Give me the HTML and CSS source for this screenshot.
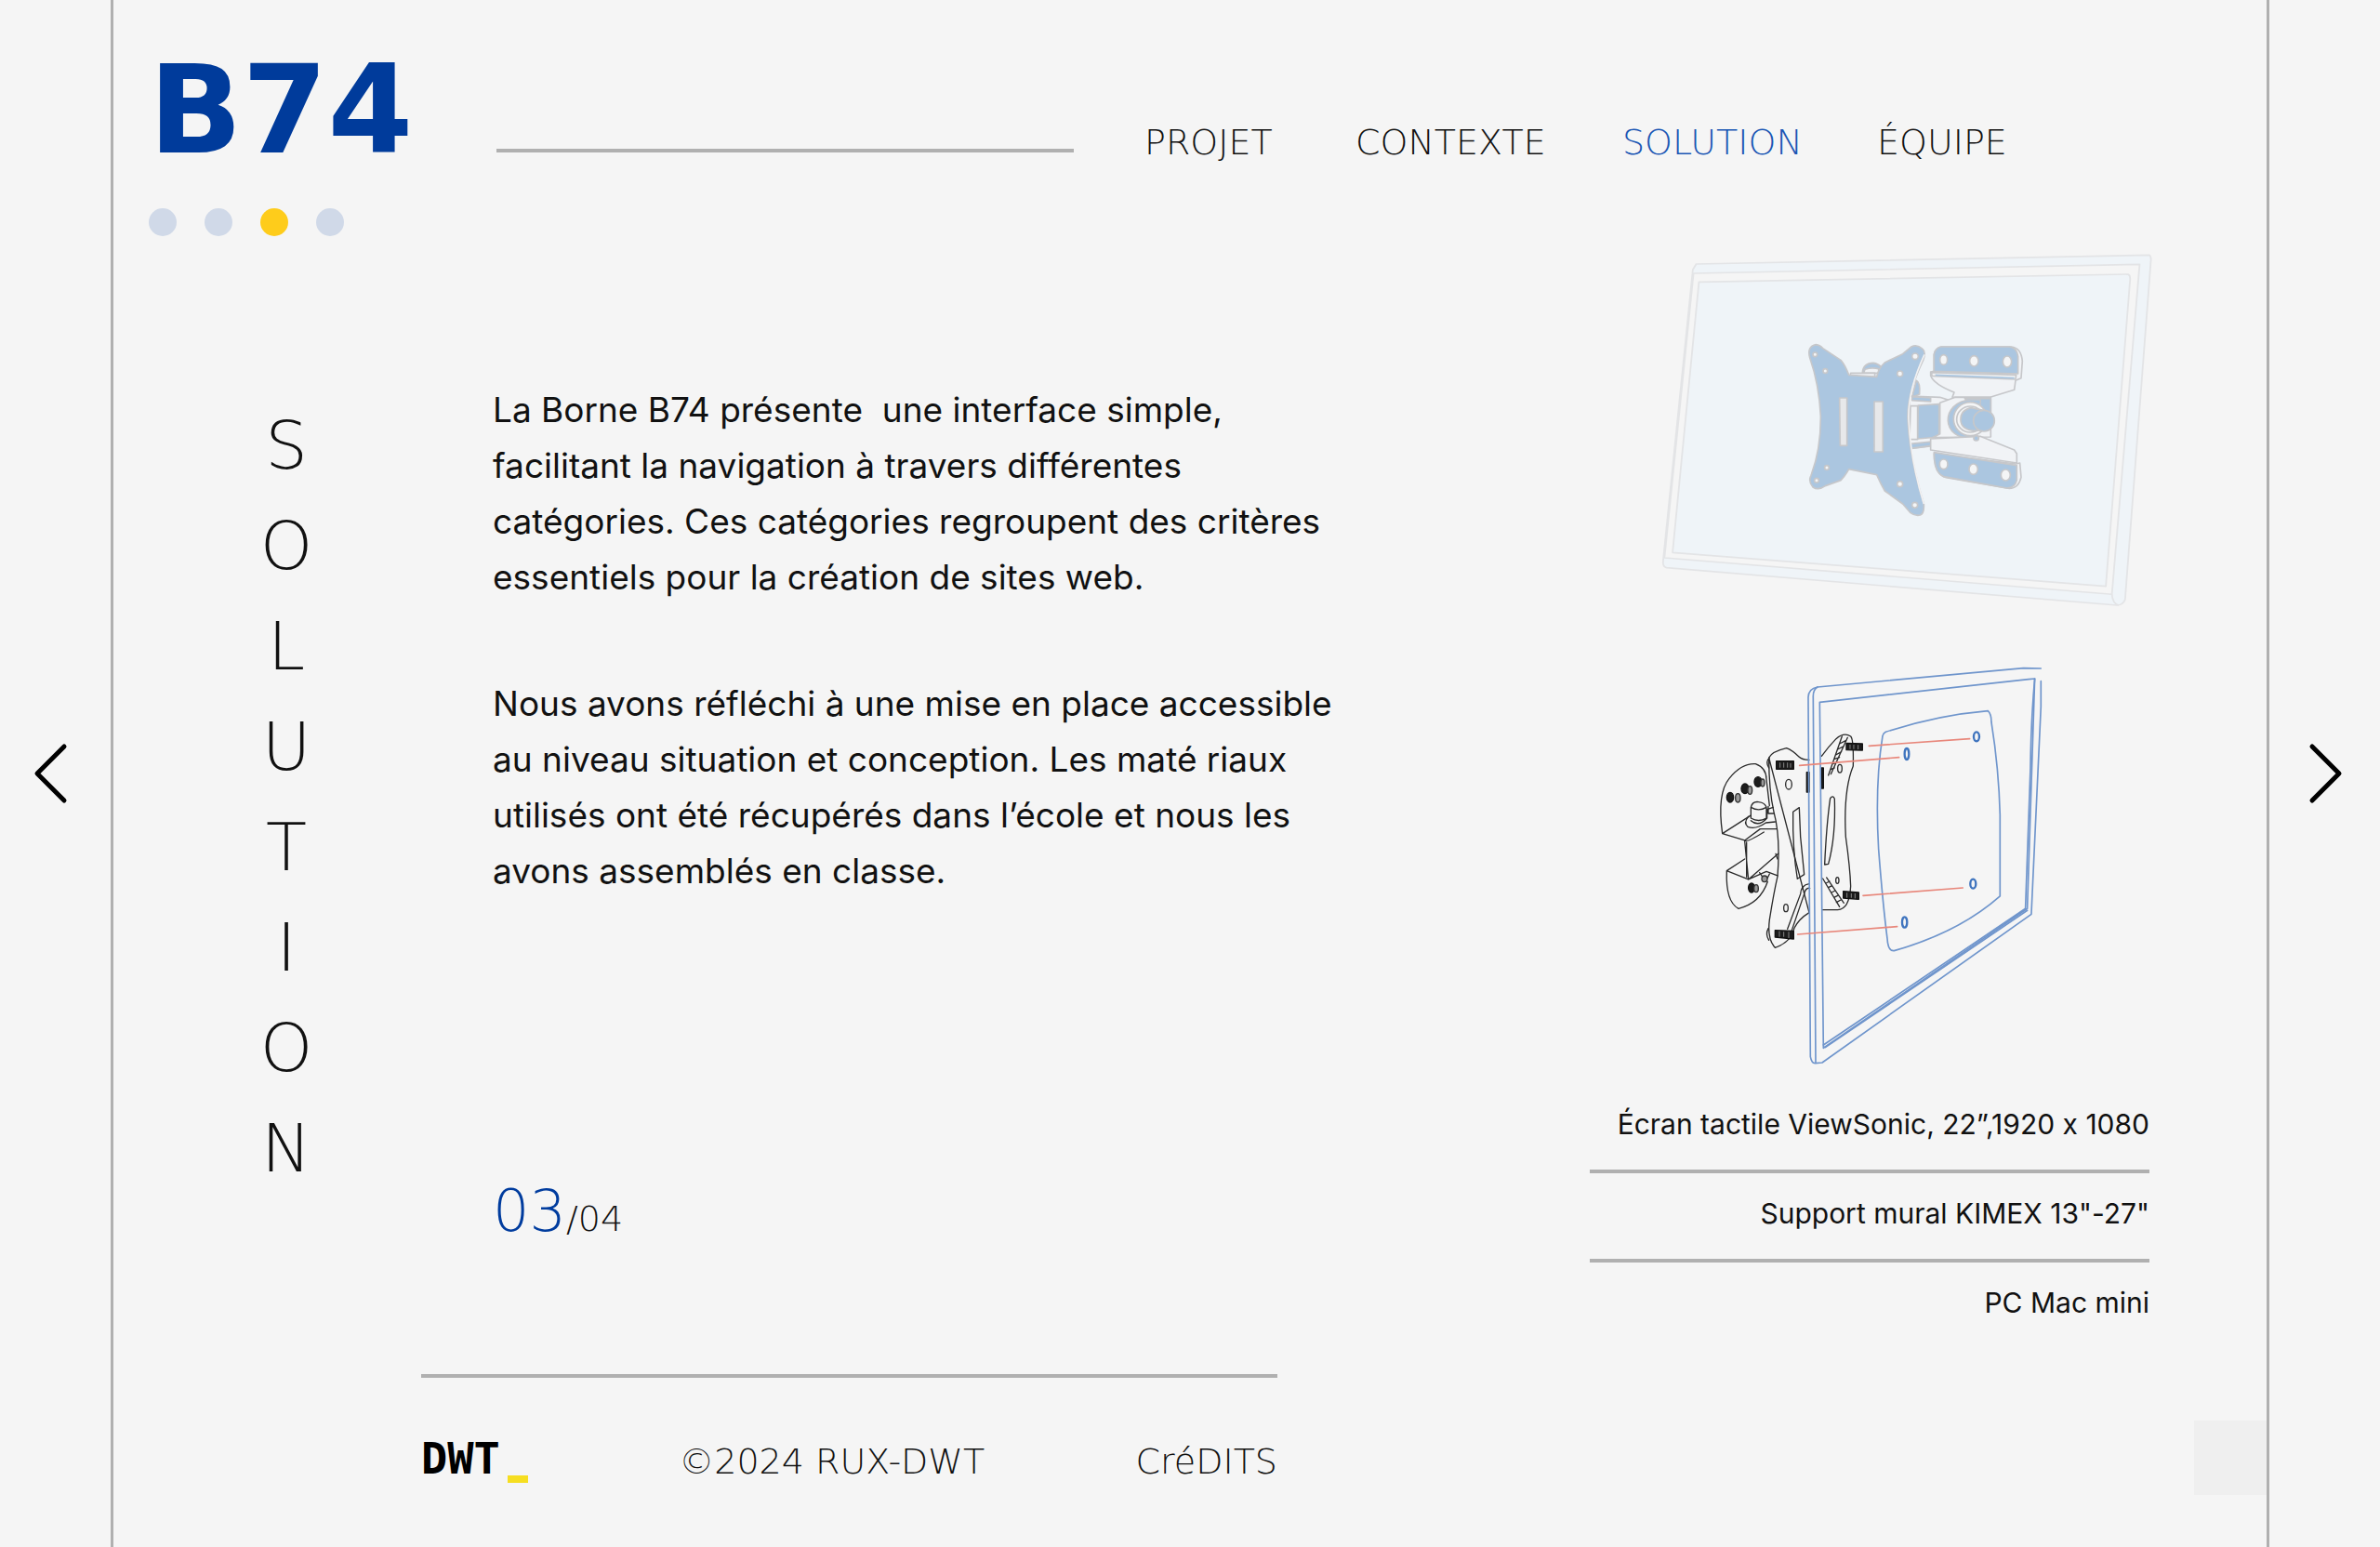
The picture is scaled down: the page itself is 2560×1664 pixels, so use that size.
FILE: index.html
```html
<!DOCTYPE html>
<html lang="fr">
<head>
<meta charset="utf-8">
<meta name="viewport" content="width=device-width, initial-scale=1">
<title>B74 – Solution</title>
<link rel="stylesheet" href="styles.css">
</head>
<body>
<div class="page">
  <button class="arrow arrow-prev" type="button" aria-label="Page précédente">
    <svg viewBox="0 0 40 72" width="40" height="72"><path d="M35 7 6 36l29 29"/></svg>
  </button>

  <div class="frame">
    <header class="header">
      <h1 class="logo">B74</h1>
      <span class="header-rule"></span>
      <nav class="nav" aria-label="Navigation principale">
        <a href="#projet">PROJET</a>
        <a href="#contexte">CONTEXTE</a>
        <a class="current" href="#solution" aria-current="page">SOLUTION</a>
        <a href="#equipe">ÉQUIPE</a>
      </nav>
    </header>

    <div class="dots">
      <button type="button" aria-label="Page 1"></button>
      <button type="button" aria-label="Page 2"></button>
      <button class="active" type="button" aria-label="Page 3"></button>
      <button type="button" aria-label="Page 4"></button>
    </div>

    <main class="main">
      <h2 class="rail">
        <span>S</span><span>O</span><span>L</span><span>U</span><span>T</span><span>I</span><span>O</span><span>N</span>
      </h2>

      <section class="copy">
        <p>La Borne B74 présente&nbsp; une interface simple,<br>facilitant la navigation à travers différentes<br>catégories. Ces catégories regroupent des critères<br>essentiels pour la création de sites web.</p>
        <p>Nous avons réfléchi à une mise en place accessible<br>au niveau situation et conception. Les maté riaux<br>utilisés ont été récupérés dans l’école et nous les<br>avons assemblés en classe.</p>
        <div class="counter"><strong>03</strong>/04</div>
      </section>

      <aside class="specs">
        <svg class="figure" viewBox="1710 254 602 426" role="img" aria-label="Écran et support mural">
          <g transform="translate(1770 250) scale(.3635 .3333)" fill="#eff4f8" stroke="#e3e4e6" stroke-width="5" stroke-linejoin="round">
            <path d="M150 102 1490 73Q1497 76 1495 95L1419 1185Q1412 1203 1395 1203L62 1082Q50 1078 52 1060L140 120Z"/>
            <path d="M142 132 1462 103 1380 1168 56 1050Z" fill="#f5f5f5"/>
            <path d="M158 160 1428 135Q1434 138 1434 150L1362 1142 80 1033Z"/>
            <path d="M1380 1168Q1382 1198 1400 1203" fill="none"/>
          </g>
          <g transform="translate(1900 340) scale(.3333)" stroke="#c6c7ca" stroke-width="5" stroke-linejoin="round" fill="#abc6e0">
            <path d="M310 182Q312 152 345 151 376 156 372 182Z"/>
            <path d="M318 172Q340 164 362 170V184H314Z" fill="#f1f3f6"/>
            <path d="M272 184H350V196H270Z" fill="#f1f3f6"/>
            <path d="M484 208Q497 215 494 252L470 262Z"/>
            <path d="M462 258 560 262 600 275V395L540 418 462 428Z" fill="#f1f3f6"/>
            <path d="M490 288 557 284V390L487 396ZM470 260 530 264V276L470 272ZM464 412 534 405V418L464 427Z"/>
            <path d="M465 290H488V398H462Z" fill="#f1f3f6"/>
            <path d="M566 99H790Q822 102 826 145L822 200 804 208 800 238 722 262H600L606 246Q540 220 530 192V180L541 178V124Q544 104 566 99Z" fill="#f1f3f6"/>
            <path d="M562 99H785Q808 102 812 130V186L541 178V124Q544 104 562 99Z"/>
            <path d="M533 182 806 190 804 204 534 193Z" fill="#f4f5f6"/>
            <path d="M545 190 800 200" stroke="#abc6e0" fill="none"/>
            <path d="M560 280 610 262H724V390L536 392 560 380Z" fill="#f1f3f6"/>
            <path d="M640 266H724V330Z"/>
            <path d="M660 270C560 276 560 400 668 395 650 380 700 280 690 270Z"/>
            <ellipse cx="658" cy="332" rx="54" ry="54" fill="#f4f5f6"/>
            <ellipse cx="658" cy="333" rx="44" ry="42" fill="none"/>
            <path d="M660 296Q626 304 627 335 628 366 672 370L704 366V305Z"/>
            <circle cx="702" cy="338" r="34"/>
            <path d="M530 396 690 388 800 432 808 444V474L530 432Z" fill="#f1f3f6"/>
            <circle cx="677" cy="394" r="8"/>
            <path d="M541 444 805 477 818 474 822 520Q814 556 784 556L580 521Q541 510 541 444Z" fill="#f1f3f6"/>
            <path d="M541 440 808 482V530Q802 554 776 555L572 518Q541 506 541 440Z"/>
            <path d="M160 92Q172 93 182 104L240 142Q254 158 266 190L356 196Q362 168 382 150L440 122 468 99Q486 90 504 106 516 116 506 142 454 250 456 330 462 460 508 606 510 638 496 642 480 646 464 634L440 606 382 564Q368 540 356 512L266 494Q254 516 240 530L190 548Q168 564 150 552 134 534 144 514 176 430 175 322 170 220 140 134 130 98 160 92Z" fill="#abc6e0"/>
            <path d="M510 124Q456 240 459 332 466 470 508 606" fill="none" stroke="#f1f1f2"/>
            <path d="M236 264H260V418H238ZM348 276H376V438H348Z" fill="#e7e8ea"/>
            <g fill="#f4f5f6">
              <circle cx="157" cy="124" r="7"/><circle cx="190" cy="177" r="7"/><circle cx="480" cy="130" r="10"/><circle cx="431" cy="186" r="9"/>
              <circle cx="195" cy="489" r="7"/><circle cx="162" cy="530" r="7"/><circle cx="431" cy="542" r="9"/><circle cx="479" cy="610" r="9"/>
              <ellipse cx="572" cy="141" rx="12" ry="16"/><ellipse cx="670" cy="145" rx="14" ry="17"/><ellipse cx="777" cy="147" rx="14" ry="18"/>
              <ellipse cx="572" cy="478" rx="13" ry="16"/><ellipse cx="668" cy="494" rx="14" ry="17"/><ellipse cx="772" cy="513" rx="15" ry="18"/>
            </g>
          </g>
        </svg>

        <svg class="figure" viewBox="1710 680 602 486" role="img" aria-label="Montage de l’écran sur le support">
          <g transform="translate(1820 700) scale(.3333)" fill="none" stroke-linejoin="round" stroke-linecap="round">
            <g stroke="#2b2b2b" stroke-width="4">
              <path d="M98 590Q80 460 120 412 160 362 205 365 240 378 240 415L250 500M98 590 170 612 220 575H272M98 590 188 532M182 738 278 655M170 612Q176 620 232 585M170 614 182 738M176 618V730M112 710 170 672M112 710 182 738 240 712 276 726M112 710Q108 810 150 832 220 815 244 745"/>
              <path d="M182 535Q165 555 180 568 205 578 238 555L268 552M190 548Q215 570 242 540V512L262 505M190 505V540Q215 555 240 540V505Q215 520 190 505Q195 485 215 488 235 490 240 505M246 502V525H264M218 716 238 745 250 720M270 655 276 672"/>
              <path d="M248 345Q258 325 305 314 325 322 345 342 355 352 378 352M418 340Q440 310 465 284 490 262 512 276 522 286 520 372 488 450 496 600 510 700 512 760 508 835 470 836H422M378 845Q345 865 330 895 320 940 268 958 242 930 250 868 264 780 276 728 286 600 264 520 248 450 248 345Z"/>
              <path d="M326 520 346 506 350 600 362 722 340 736Q324 640 326 520ZM446 476Q455 464 460 478 464 600 440 688L428 690Q434 560 446 476Z"/>
              <path d="M484 276 440 402M502 280 448 398M476 300 496 290M470 318 490 308M464 336 482 326M458 350 476 344M452 366 468 360M446 384 460 378M422 735 476 826M434 732 490 814M432 750 444 744M440 764 452 758M450 780 462 774M458 796 470 790M466 812 480 804"/>
              <path d="M378 752Q352 756 350 785L308 898M380 766Q366 764 362 785L322 902"/>
              <ellipse cx="312" cy="431" rx="10" ry="16"/><ellipse cx="477" cy="380" rx="7" ry="13"/><ellipse cx="303" cy="830" rx="7" ry="12"/><ellipse cx="469" cy="741" rx="5" ry="10"/>
              <path d="M250 345Q236 358 248 378M246 896Q236 915 248 934"/>
            </g>
            <g fill="#1c1c1c" stroke="#111" stroke-width="4">
              <path d="M272 356H328V382H272ZM498 298 550 300V321L498 320ZM488 776 538 780V802L488 798ZM268 902 328 904V930L268 924ZM370 392H378V456H370ZM418 378H424V444H418Z"/>
              <ellipse cx="123" cy="473" rx="11" ry="16"/><ellipse cx="171" cy="445" rx="12" ry="16"/><ellipse cx="213" cy="423" rx="12" ry="16"/><ellipse cx="192" cy="765" rx="10" ry="15"/>
            </g>
            <g stroke="#333" stroke-width="4" fill="#9a9a9a">
              <ellipse cx="148" cy="475" rx="8" ry="14"/><ellipse cx="187" cy="450" rx="7" ry="13"/><ellipse cx="228" cy="426" rx="6" ry="12"/><ellipse cx="207" cy="767" rx="7" ry="12"/><ellipse cx="234" cy="736" rx="9" ry="10"/>
            </g>
            <path d="M284 362V376M296 362V376M308 362V376M318 364V376M510 304V316M522 304V316M536 305V317M500 782V796M514 784V796M526 784V798M282 906V922M296 908V922M312 908V926" stroke="#888" stroke-width="3"/>
            <g stroke="#6f95cc" stroke-width="5">
              <path d="M1126 57 1070 56 405 117Q376 122 375 150L382 1310Q386 1332 398 1331L420 1329 1095 850 1126 180 1126 98"/>
              <path d="M405 117Q390 125 391 150L399 1328"/>
              <path d="M424 1282 412 166 1086 92 1106 90 1082 832Z"/>
              <path d="M1106 90Q1094 220 1092 380L1076 832 424 1272M430 1280 1082 838"/>
              <path d="M625 262Q790 208 955 194 966 204 966 230 990 380 994 530V792Q860 910 652 968 632 970 630 928 616 820 602 640 590 430 615 275 617 266 625 262Z"/>
            </g>
            <g stroke="#3f74be" stroke-width="7">
              <ellipse cx="693" cy="333" rx="7" ry="18"/><ellipse cx="918" cy="277" rx="9" ry="15"/><ellipse cx="907" cy="752" rx="9" ry="15"/><ellipse cx="686" cy="876" rx="8" ry="17"/>
            </g>
            <path d="M347 370 668 344M571 307 896 284M552 790 874 765M341 915 662 890" stroke="#e8877b" stroke-width="5"/>
          </g>
        </svg>

        <ul class="spec-list">
          <li>Écran tactile ViewSonic, 22”,1920 x 1080</li>
          <li>Support mural KIMEX 13"-27"</li>
          <li>PC Mac mini</li>
        </ul>
      </aside>
    </main>

    <footer class="footer">
      <a class="dwt" href="#dwt">DWT<span class="cursor"></span></a>
      <span>©2024 RUX-DWT</span>
      <a href="#credits">CréDITS</a>
    </footer>
    <span class="corner"></span>
  </div>

  <button class="arrow arrow-next" type="button" aria-label="Page suivante">
    <svg viewBox="0 0 40 72" width="40" height="72"><path d="M5 7l29 29L5 65"/></svg>
  </button>
</div>
</body>
</html>
```
FILE: styles.css
```css
* {
  box-sizing: border-box;
}

body {
  margin: 0;
  background: #f5f5f5;
  color: #111;
  font-family: Inter, "Liberation Sans", sans-serif;
  font-variant-ligatures: no-contextual;
}

a {
  color: inherit;
  text-decoration: none;
}

button {
  padding: 0;
  border: 0;
  background: none;
  cursor: pointer;
}

.page {
  display: grid;
  grid-template-columns: 119px 1fr 119px;
  min-height: 100vh;
}

.arrow {
  display: flex;
  align-items: center;
}

.arrow-prev {
  padding-left: 34px;
}

.arrow-next {
  justify-content: flex-end;
  padding-right: 38px;
}

.arrow path {
  fill: none;
  stroke: #000;
  stroke-width: 5;
  stroke-linecap: round;
  stroke-linejoin: round;
}

.frame {
  position: relative;
  padding: 72px 126px 40px 38px;
  border: solid #b0b0b0;
  border-width: 0 3px;
}

.header {
  display: flex;
  align-items: flex-end;
}

.logo {
  width: 374px;
  margin: 0;
  color: #003b9b;
  font: 700 132px/92px "DejaVu Sans", sans-serif;
}

.header-rule {
  flex: 1;
  height: 4px;
  background: #b0b0b0;
}

.nav {
  display: grid;
  grid-template-columns: 227px 287px 274px 293px;
  margin-left: 76px;
  font: 200 38px/22px "DejaVu Sans Light", "DejaVu Sans", sans-serif;
}

.nav .current {
  color: #1a56b4;
}

.dots {
  display: flex;
  gap: 30px;
  margin-top: 60px;
}

.dots button {
  width: 30px;
  height: 30px;
  border-radius: 50%;
  background: #d0d9e8;
}

.dots .active {
  background: #fecc1b;
}

.main {
  display: grid;
  grid-template-columns: 296px 1fr 602px;
  column-gap: 74px;
}

.rail {
  display: flex;
  flex-direction: column;
  align-items: center;
  margin: 171px 0 0;
  font: 200 72px/108px "DejaVu Sans Light", "DejaVu Sans", sans-serif;
}

.copy {
  padding-top: 157px;
  font-size: 37px;
  line-height: 60px;
}

.copy p {
  margin: 0 0 76px;
  white-space: nowrap;
}

.counter {
  margin-top: 306px;
  font: 200 38px/60px "DejaVu Sans Light", "DejaVu Sans", sans-serif;
}

.counter strong {
  color: #003c9e;
  font-size: 62px;
  font-weight: 200;
}

.figure {
  display: block;
  width: 100%;
  overflow: visible;
}

.spec-list {
  margin: 0;
  padding: 0;
  list-style: none;
  font-size: 30px;
  line-height: 40px;
  text-align: right;
}

.spec-list li {
  padding: 23px 0 29px;
}

.spec-list li:not(:last-child) {
  border-bottom: 4px solid #b0b0b0;
}

.footer {
  display: flex;
  align-items: baseline;
  justify-content: space-between;
  width: 921px;
  margin: 28px 0 0 293px;
  padding-top: 57px;
  border-top: 4px solid #b0b0b0;
  font: 200 38px/60px "DejaVu Sans Light", "DejaVu Sans", sans-serif;
}

.dwt {
  color: #000;
  font: 700 47px/60px "DejaVu Sans Mono", monospace;
}

.cursor {
  display: inline-block;
  width: 22px;
  height: 8px;
  margin-left: 8px;
  background: #f6de21;
  vertical-align: -10px;
}

.corner {
  position: absolute;
  right: 0;
  bottom: 56px;
  width: 78px;
  height: 80px;
  background: #efefef;
}
```
